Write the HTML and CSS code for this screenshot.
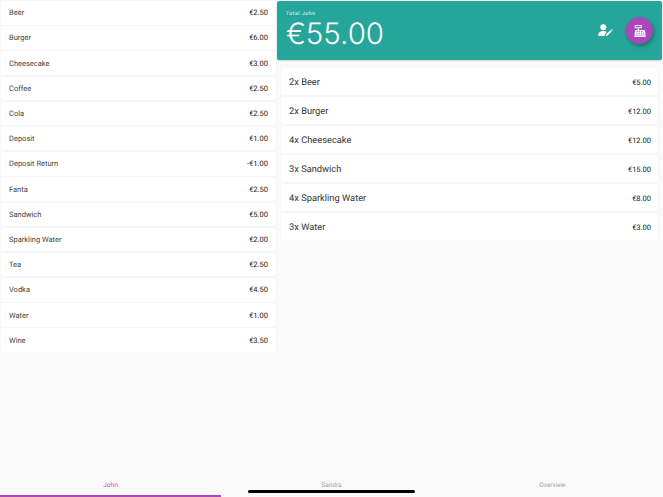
FILE: index.html
```html
<!DOCTYPE html>
<html lang="en">
<head>
<meta charset="utf-8">
<title>Tab John</title>
<link rel="stylesheet" href="styles.css">
</head>
<body>
<div class="page">
  <main class="main">
    <section class="products">
      <div class="row"><span>Beer</span><span class="price">€2.50</span></div>
      <div class="row"><span>Burger</span><span class="price">€6.00</span></div>
      <div class="row"><span>Cheesecake</span><span class="price">€3.00</span></div>
      <div class="row"><span>Coffee</span><span class="price">€2.50</span></div>
      <div class="row"><span>Cola</span><span class="price">€2.50</span></div>
      <div class="row"><span>Deposit</span><span class="price">€1.00</span></div>
      <div class="row"><span>Deposit Return</span><span class="price">-€1.00</span></div>
      <div class="row"><span>Fanta</span><span class="price">€2.50</span></div>
      <div class="row"><span>Sandwich</span><span class="price">€5.00</span></div>
      <div class="row"><span>Sparkling Water</span><span class="price">€2.00</span></div>
      <div class="row"><span>Tea</span><span class="price">€2.50</span></div>
      <div class="row"><span>Vodka</span><span class="price">€4.50</span></div>
      <div class="row"><span>Water</span><span class="price">€1.00</span></div>
      <div class="row"><span>Wine</span><span class="price">€3.50</span></div>
    </section>
    <section class="order">
      <header class="total">
        <div class="total-text">
          <div class="total-label">Total John</div>
          <div class="total-value">€55.00</div>
        </div>
        <svg class="edit-icon" viewBox="0 0 16 14" aria-hidden="true">
          <circle cx="5.6" cy="3.4" r="3.2" fill="#fff"/>
          <path d="M0.3 13v-1.6C0.3 9 3 7.6 5.6 7.6c1.4 0 2.9.4 4 1L7.4 11.2 6.8 13z" fill="#fff"/>
          <path d="M8.3 13l.4-1.7 4.6-4.6 1.3 1.3-4.6 4.6zM13.8 6.2l.7-.7 1.3 1.3-.7.7z" fill="#fff"/>
        </svg>
        <div class="fab">
          <svg viewBox="0 0 13 13" aria-hidden="true">
            <path fill="#fff" fill-rule="evenodd" d="M0.8 0h7.6v3.4H5.2v2h6.4l1 5.2H0.4l1-5.2h2.8v-2H0.8zM1.8 1v1.4h5.6V1zM3 6.6v1h1.2v-1zM5.4 6.6v1h1.2v-1zM7.8 6.6v1H9v-1zM2.6 8.4v1h1.2v-1zM5.1 8.4v1h1.2v-1zM7.6 8.4v1h1.2v-1zM9.8 8.4v1H11v-1z"/>
            <rect fill="#fff" x="0.4" y="11.2" width="12.2" height="1.8"/>
          </svg>
        </div>
      </header>
      <div class="lines">
        <div class="line"><span class="line-name">2x Beer</span><span class="price">€5.00</span></div>
        <div class="line"><span class="line-name">2x Burger</span><span class="price">€12.00</span></div>
        <div class="line"><span class="line-name">4x Cheesecake</span><span class="price">€12.00</span></div>
        <div class="line"><span class="line-name">3x Sandwich</span><span class="price">€15.00</span></div>
        <div class="line"><span class="line-name">4x Sparkling Water</span><span class="price">€8.00</span></div>
        <div class="line"><span class="line-name">3x Water</span><span class="price">€3.00</span></div>
      </div>
    </section>
  </main>
  <nav class="tabs">
    <div class="tab tab-active">John</div>
    <div class="tab">Sandra</div>
    <div class="tab">Overview</div>
  </nav>
  <div class="home-indicator"></div>
</div>
</body>
</html>
```
FILE: styles.css
```css
* { box-sizing: border-box; }
html, body { margin: 0; height: 100%; }
body {
  background: #fafafa;
  font-family: Roboto, "Liberation Sans", sans-serif;
  color: #212121;
  overflow: hidden;
  text-rendering: geometricPrecision;
}
.page {
  position: relative;
  height: 497px;
  display: flex;
  flex-direction: column;
}
.main {
  flex: 1;
  display: flex;
  align-items: flex-start;
  min-height: 0;
}
.products {
  width: 277px;
  padding: 1px 1px 0;
  display: flex;
  flex-direction: column;
  gap: 1.7px;
}
.row {
  height: 23.5px;
  padding: 0 8px;
  background: #fff;
  border-radius: 3px;
  box-shadow: 0 0 2px rgba(0, 0, 0, 0.05);
  display: flex;
  align-items: center;
  justify-content: space-between;
  font-size: 7.5px;
  color: #444;
}
.price {
  font-size: 7.5px;
  color: #222;
}
.order {
  flex: 1;
  display: flex;
  flex-direction: column;
  padding-top: 1px;
}
.total {
  height: 59px;
  margin-right: 1px;
  padding: 0 9px;
  background: #26a69a;
  border-radius: 2px;
  box-shadow: 0 1px 2px rgba(0, 0, 0, 0.15);
  display: flex;
  align-items: center;
  color: #fff;
}
.total-text { flex: 1; padding-top: 3px; }
.total-label {
  font-size: 5px;
  letter-spacing: 0.6px;
  line-height: 6px;
  margin-top: -3px;
  margin-bottom: 1px;
}
.total-value {
  font-family: Inter, "Liberation Sans", sans-serif;
  font-size: 29.5px;
  font-weight: 300;
  line-height: 32px;
}
.edit-icon {
  width: 15px;
  height: 13px;
  margin-right: 13px;
}
.fab {
  width: 27px;
  height: 27px;
  border-radius: 50%;
  background: #ab47bc;
  box-shadow: 1px 2px 4px rgba(0, 0, 0, 0.35);
  display: flex;
  align-items: center;
  justify-content: center;
}
.fab svg { width: 12px; height: 12px; }
.lines {
  margin-top: 8px;
  padding: 0 5px 0 4px;
  display: flex;
  flex-direction: column;
  gap: 2px;
}
.line {
  height: 27px;
  padding: 1px 7px 0 8px;
  background: #fff;
  border-radius: 3px;
  box-shadow: 0 0 2px rgba(0, 0, 0, 0.05);
  display: flex;
  align-items: center;
  justify-content: space-between;
}
.line-name {
  font-size: 9.3px;
  color: #333;
}
.tabs {
  height: 26px;
  display: flex;
  flex-shrink: 0;
}
.tab {
  flex: 1;
  padding-top: 10px;
  text-align: center;
  font-size: 6.5px;
  color: #9e9e9e;
  border-bottom: 2px solid transparent;
}
.tab-active {
  color: #ab47bc;
  border-bottom-color: #ab47bc;
}
.home-indicator {
  position: absolute;
  left: 248px;
  bottom: 4px;
  width: 167px;
  height: 3px;
  border-radius: 2px;
  background: #000;
}
```
